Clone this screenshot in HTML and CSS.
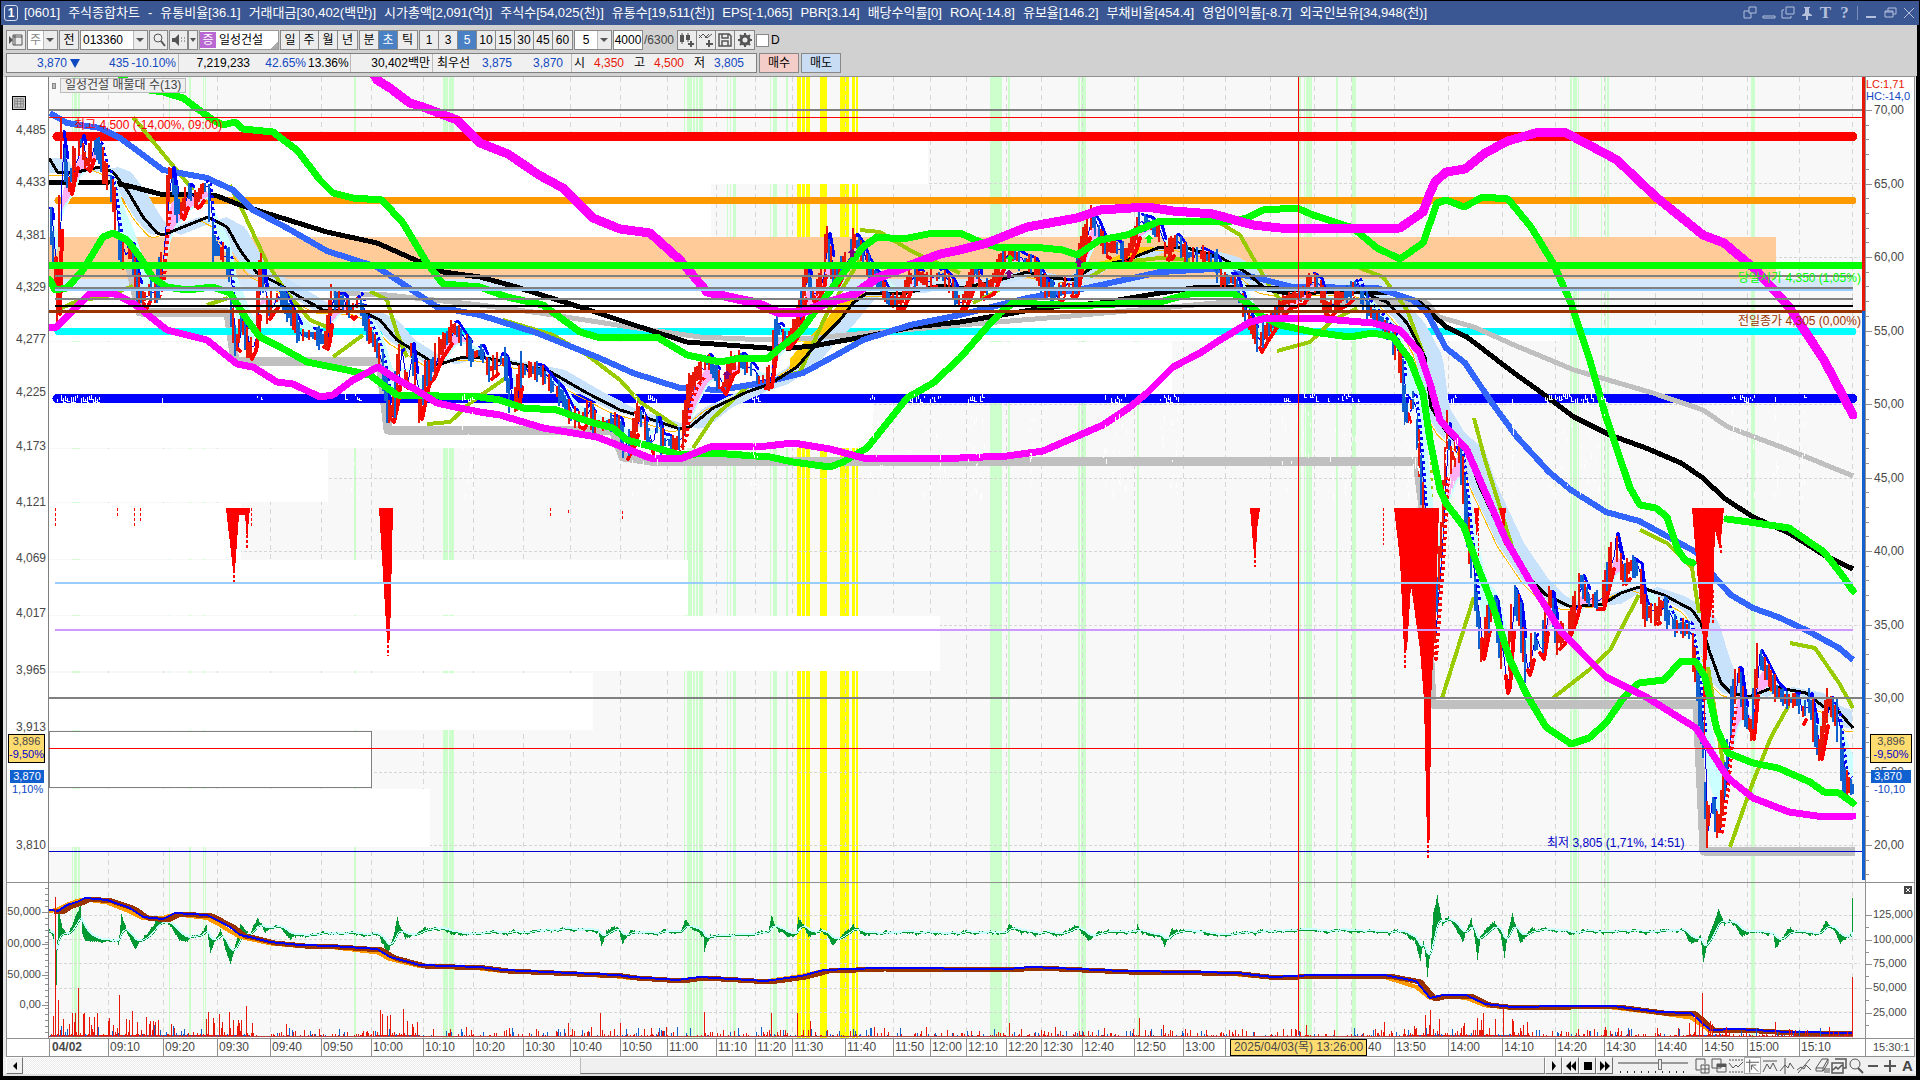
FILE: index.html
```html
<!DOCTYPE html>
<html lang="ko">
<head>
  <meta charset="UTF-8">
  <meta name="viewport" content="width=device-width, initial-scale=1.0">
  <title>[0601] 주식종합차트</title>
  <link rel="stylesheet" href="styles.css">
</head>
<body>

<div class="window">
  <header class="titlebar">
    <span class="badge">1</span>
    <h1 class="title">
      <span>[0601]</span><span>주식종합차트</span><span>-</span><span>유통비율[36.1]</span><span>거래대금[30,402(백만)]</span><span>시가총액[2,091(억)]</span><span>주식수[54,025(천)]</span><span>유통수[19,511(천)]</span><span>EPS[-1,065]</span><span>PBR[3.14]</span><span>배당수익률[0]</span><span>ROA[-14.8]</span><span>유보율[146.2]</span><span>부채비율[454.4]</span><span>영업이익률[-8.7]</span><span>외국인보유[34,948(천)]</span>
    </h1>
    <nav class="win-buttons">
      <button aria-label="분리"><svg viewBox="0 0 14 14"><path d="M6 1h7v6H6zM6 5H1v7h7V7" /></svg></button>
      <button aria-label="접기"><svg viewBox="0 0 14 14"><path d="M1 10h12v2H1z" /></svg></button>
      <button aria-label="복사"><svg viewBox="0 0 14 14"><path d="M5 1h8v7H5zM3 4H1v8h9v-2" /></svg></button>
      <button aria-label="고정"><svg viewBox="0 0 14 14"><path class="fill" d="M4 1h6v1H9v5l3 2v1H8v4H6v-4H2V9l3-2V2H4z" /></svg></button>
      <button class="serif" aria-label="글꼴">T</button>
      <button class="serif" aria-label="도움말">?</button>
      <i class="bar"></i>
      <button aria-label="최소화"><svg viewBox="0 0 14 14"><path class="fill" d="M2 10h10v2H2z" /></svg></button>
      <button aria-label="이전 크기로"><svg viewBox="0 0 14 14"><path d="M5 5V2h8v6h-3M2 5h8v6H2zM2 6h8" /></svg></button>
      <button aria-label="닫기"><svg viewBox="0 0 14 14"><path d="M2 2l10 10M12 2L2 12" /></svg></button>
    </nav>
  </header>

  <div class="toolbar">
    <button class="btn w20" aria-label="목록"><svg viewBox="0 0 16 16"><path d="M5 3h9v10H5zM7 3v10M5 5h9" /><path class="fill" d="M1 4v8l4-4z" /></svg></button>
    <span class="combo w31"><select aria-label="구분" class="dim"><option>주</option></select><i></i></span>
    <button class="btn w20">전</button>
    <span class="combo w68"><input aria-label="종목코드" value="013360"><i></i></span>
    <button class="btn w19" aria-label="검색"><svg viewBox="0 0 16 16"><circle cx="7" cy="6" r="4" /><path d="M10 9l4 5" stroke-width="2" /></svg></button>
    <span class="sound"><button class="btn w19" aria-label="소리"><svg viewBox="0 0 16 16"><path class="fill" d="M1 6h3l4-4v12l-4-4H1z" /><path d="M10 6h1M10 9h1M13 6h1M13 9h1" /></svg></button><button class="btn w10" aria-label="소리 메뉴"><i class="tri"></i></button></span>
    <span class="stock"><b>증</b><input aria-label="종목명" value="일성건설"></span>
    <span class="group"><button class="btn">일</button><button class="btn">주</button><button class="btn">월</button><button class="btn">년</button></span>
    <span class="group"><button class="btn">분</button><button class="btn on">초</button><button class="btn">틱</button></span>
    <span class="group"><button class="btn">1</button><button class="btn">3</button><button class="btn on">5</button><button class="btn">10</button><button class="btn">15</button><button class="btn">30</button><button class="btn">45</button><button class="btn">60</button></span>
    <span class="combo w38"><select aria-label="주기"><option>5</option></select><i></i></span>
    <span class="count"><input aria-label="개수" value="4000"><span>/6300</span></span>
    <span class="group">
      <button class="btn" aria-label="차트 추가"><svg viewBox="0 0 16 16"><path class="fill" d="M1 3h4v7H1zM7 3h4v5H7z" /><path d="M3 1v11M9 1v9" /><path d="M12 9v6M9 12h6" stroke-width="2" /></svg></button><button class="btn" aria-label="지표 추가"><svg viewBox="0 0 16 16"><path d="M1 6l4-4 4 4 5-4M1 3l3 3M7 6l4-4" /><path d="M11 8v7M8 12h7" stroke-width="2" /></svg></button><button class="btn" aria-label="저장"><svg viewBox="0 0 16 16"><path d="M2 2h10l2 2v10H2zM5 2v4h6V2M5 14V9h6v5" stroke-width="1.5" /></svg></button><button class="btn" aria-label="설정"><svg viewBox="0 0 16 16"><circle cx="8" cy="8" r="4" stroke-width="3" /><path d="M8 1v2M8 13v2M1 8h2M13 8h2M3 3l2 2M11 11l2 2M13 3l-2 2M3 13l2-2" stroke-width="2" /></svg></button>
    </span>
    <label class="check"><input type="checkbox">D</label>
  </div>

  <div class="quote">
    <div class="quote-box">
      <span class="cell c1 blue"><em>3,870</em><svg class="fall" viewBox="0 0 10 10"><path d="M0 1h10L5 10z" /></svg></span><span class="cell c2 blue">435</span><span class="cell c3 blue line">-10.10%</span>
      <span class="cell c4">7,219,233</span><span class="cell c5 blue">42.65%</span><span class="cell c6 line">13.36%</span>
      <span class="cell c7 line">30,402백만</span>
      <span class="cell c8">최우선</span><span class="cell c9 blue">3,875</span><span class="cell c10 blue line">3,870</span>
      <span class="cell c11">시</span><span class="cell c12 red">4,350</span><span class="cell c11">고</span><span class="cell c12 red">4,500</span><span class="cell c11">저</span><span class="cell c12 blue">3,805</span>
    </div>
    <button class="order buy">매수</button>
    <button class="order sell">매도</button>
  </div>

  <main class="chart">
    <div class="axis left" id="priceLeft">
      <button class="grid-btn" aria-label="표"><svg viewBox="0 0 14 14"><path d="M2 2h10v10H2zM2 5h10M5 2v10M9 2v10M2 8h10" /></svg></button>
    </div>
    <div class="plot" id="pricePlot">
      <svg id="price" viewBox="49 77 1816 805" preserveAspectRatio="none"></svg>
      <div class="legend"><i></i><span>일성건설 매물대 수(13)</span></div>
    </div>
    <div class="axis right" id="priceRight">
      <p class="extreme"><span class="red">LC:1,71</span><span class="blue">HC:-14,0</span></p>
    </div>

    <div class="axis left sub" id="volLeft"></div>
    <div class="plot sub">
      <svg id="volume" viewBox="49 883 1816 155" preserveAspectRatio="none"></svg>
    </div>
    <div class="axis right sub" id="volRight"><button class="close-sub" aria-label="지표 닫기"><svg viewBox="0 0 8 8"><path d="M2 2l4 4M6 2L2 6" /></svg></button></div>

    <div class="times-pad"></div>
    <div class="times" id="times"></div>
    <div class="times-end">15:30:1</div>
  </main>

  <footer class="scroll">
    <button class="sbtn" aria-label="왼쪽으로"><svg viewBox="0 0 12 12"><path class="solid" d="M8 2v8L4 6z" /></svg></button>
    <div class="track"><div class="thumb"></div></div>
    <button class="sbtn" aria-label="재생"><svg viewBox="0 0 12 12"><path class="solid" d="M4 1v10l4-5z" /></svg></button>
    <button class="sbtn" aria-label="뒤로"><svg viewBox="0 0 12 12"><path class="solid" d="M6 1v10L1 6zM11 1v10L6 6z" /></svg></button>
    <button class="sbtn" aria-label="정지"><svg viewBox="0 0 12 12"><path class="solid" d="M2 2h8v8H2z" /></svg></button>
    <button class="sbtn" aria-label="앞으로"><svg viewBox="0 0 12 12"><path class="solid" d="M1 1v10l5-5zM6 1v10l5-5z" /></svg></button>
    <div class="speed"><input type="range" aria-label="속도" min="0" max="10" value="6"></div>
    <div class="tools">
      <button aria-label="창 추가"><svg viewBox="0 0 16 16"><path d="M2 1h9v5M6 12H2V1M7 7h8v8H7zM7 11h8M11 7v8" /></svg></button>
      <button aria-label="창 복사"><svg viewBox="0 0 16 16"><path d="M1 1h9v9H1zM6 6h9v8H6z" /><path class="fill" d="M6 6h9v3H6z" /></svg></button>
      <button aria-label="영역"><svg viewBox="0 0 16 16"><path d="M1 2h14M1 14h14" stroke-dasharray="2 1" /><path d="M1 5l4 5 3-3 2 2 5-5" /></svg></button>
      <button class="on" aria-label="십자선"><svg viewBox="0 0 16 16"><path d="M1 4h14M5 1v14M7 7l7 7M7 7v5M7 7h5" /></svg></button>
      <button aria-label="수평선"><svg viewBox="0 0 16 16"><path d="M1 3h14M1 14l4-8 3 5 3-6 4 8" /></svg></button>
      <button aria-label="수직선"><svg viewBox="0 0 16 16"><path d="M6 0v16M1 13l5-6 3 3 2-5 4 6" /></svg></button>
      <button aria-label="추세선"><svg viewBox="0 0 16 16"><path d="M2 15L14 1M1 12l4-3 3 2 2-4 5 5" /></svg></button>
      <button aria-label="모두 지우기"><svg viewBox="0 0 16 16"><path d="M8 1h6l-5 9H2zM2 10v3h7v-3M9 13l5-8V1M11 10v5M13 10v5M15 10v5" /></svg></button>
      <button aria-label="비교"><svg viewBox="0 0 16 16"><path d="M4 1h11v9h-3M1 5h11v10H1zM2 12l3-3 2 2 4-4" stroke-width="1.5" /></svg></button>
      <button aria-label="돋보기"><svg viewBox="0 0 16 16"><circle cx="7" cy="6" r="5" /><path d="M10 10l5 5" stroke-width="2" /></svg></button>
      <button aria-label="축소"><svg viewBox="0 0 16 16"><path d="M3 8h10" stroke-width="2" /></svg></button>
      <button aria-label="확대"><svg viewBox="0 0 16 16"><path d="M2 8h12M8 2v12" stroke-width="2" /></svg></button>
      <button aria-label="자동">A</button>
    </div>
  </footer>
</div>

<script src="chart.js"></script>
</body>
</html>
```
FILE: styles.css
```css
* { box-sizing: border-box; }
body { margin: 0; background: #000; color: #000; font-family: "Liberation Sans", "Noto Sans CJK KR", sans-serif; font-size: 12px; line-height: 16px; }
button, input, select { font: inherit; color: inherit; margin: 0; padding: 0; border: 0; background: none; }
svg { display: block; }
h1, p { margin: 0; }
.blue { color: #1048c0; }
.red { color: #e81808; }

.window { height: 100vh; padding: 1px 3px 4px 3px; display: flex; flex-direction: column; overflow: hidden; }

/* title bar */
.titlebar { height: 24px; flex: none; background: #3a5793; color: #fff; display: flex; align-items: center; margin: 0 -2px; padding: 0 3px; }
.badge { width: 14px; height: 16px; border: 1px solid #d8e0f0; border-radius: 3px; font-weight: bold; line-height: 14px; text-align: center; }
.title { flex: 1; display: flex; gap: 8px; margin-left: 6px; font-size: 13px; font-weight: normal; line-height: 20px; white-space: nowrap; overflow: hidden; }
.win-buttons { display: flex; align-items: center; gap: 4px; color: #b4c0dc; }
.win-buttons button { width: 15px; height: 18px; display: flex; align-items: center; justify-content: center; }
.win-buttons svg { width: 14px; height: 14px; fill: none; stroke: #b4c0dc; }
.win-buttons .fill { fill: #b4c0dc; stroke: none; }
.win-buttons .serif { font-family: "Liberation Serif", serif; font-size: 17px; font-weight: bold; }
.bar { width: 1px; height: 14px; background: #7d90bb; margin: 0 1px; }

/* toolbar */
.toolbar { height: 28px; flex: none; display: flex; align-items: center; gap: 1px; padding: 2px 3px 0; background: #d1d1d1; }
.btn { width: 19px; height: 20px; border: 1px solid #888; background: #ececec; display: flex; align-items: center; justify-content: center; white-space: nowrap; }
.btn svg, .tools svg { width: 16px; height: 16px; fill: none; stroke: #555; }
.btn .fill, .tools .fill { fill: #555; stroke: none; }
.btn.on { background: #4a80c4; color: #fff; }
.group { display: flex; border: 1px solid #888; }
.group .btn { height: 18px; border-width: 0 1px 0 0; }
.group .btn:last-child { border-right: 0; }
.sound { display: flex; }
.w10 { width: 10px; }
.w19 { width: 19px; }
.w20 { width: 20px; }
.w31 { width: 31px; }
.w38 { width: 38px; }
.w68 { width: 68px; }
.combo { height: 20px; border: 1px solid #888; background: #fff; display: flex; }
.combo select, .combo input { flex: 1; min-width: 0; appearance: none; padding: 0 2px; outline: 0; }
.combo select { text-align: center; text-align-last: center; padding: 0; }
.combo .dim { color: #888; }
.combo i { width: 14px; background: #ececec; border-left: 1px solid #bbb; position: relative; }
.combo i::after, .tri { content: ""; border: 4px solid transparent; border-top-color: #555; border-bottom: 0; position: absolute; left: 2px; top: 7px; }
.tri { position: static; border-left-width: 3px; border-right-width: 3px; }
.stock { width: 80px; height: 20px; background: #fff; border: 1px solid #999; display: flex; }
.stock b { width: 16px; margin: 1px 0; background: #b868d0; color: #fff; text-align: center; font-weight: normal; }
.stock input { flex: 1; min-width: 0; padding-left: 3px; background: linear-gradient(135deg, transparent 50%, #aaa 50%) right bottom / 7px 7px no-repeat; }
.count { display: flex; align-items: center; color: #444; margin-right: 2px; }
.count input { width: 30px; height: 20px; border: 1px solid #888; background: #fff; color: #000; text-align: center; margin-right: 1px; }
.check { display: flex; align-items: center; gap: 2px; }
.check input { appearance: none; width: 13px; height: 13px; background: #fff; border: 1px solid #888; }

/* quote line */
.quote { height: 23px; flex: none; display: flex; gap: 2px; padding: 0 3px 3px; background: #d1d1d1; }
.quote-box { width: 751px; border: 1px solid #808080; background: #f0f0f0; display: flex; line-height: 18px; white-space: nowrap; }
.cell { text-align: right; padding-right: 2px; flex: none; }
.line { border-right: 1px solid #bbb; }
.c1 { width: 75px; display: flex; justify-content: flex-end; align-items: center; gap: 3px; }
.c1 em { font-style: normal; }
.fall { width: 10px; height: 10px; fill: #1048c0; }
.c2 { width: 49px; }
.c3 { width: 48px; }
.c4 { width: 73px; }
.c5 { width: 56px; }
.c6 { width: 43px; }
.c7 { width: 82px; }
.c8 { width: 39px; }
.c9 { width: 42px; }
.c10 { width: 58px; padding-right: 8px; }
.c11 { width: 15px; }
.c12 { width: 45px; padding-right: 8px; }
.order { width: 40px; border: 1px solid #888; }
.buy { background: #f4ccc8; }
.sell { background: #c8dcf4; }

/* chart */
.chart { flex: 1; min-height: 0; display: grid; grid-template-columns: 43px 1fr 50px; grid-template-rows: 805fr 156fr 19px; background: #fff; border-left: 3px solid #e8e8e8; border-right: 1px solid #e8e8e8; border-top: 1px solid #909090; margin-right: 1px; }
.axis { position: relative; overflow: hidden; color: #484848; font-size: 12px; }
.axis.left { border-left: 1px solid #909090; border-right: 1px solid #808080; }
.axis.right { border-left: 1px solid #909090; border-right: 1px solid #909090; }
.axis .tag { position: absolute; transform: translateY(-50%); white-space: nowrap; line-height: 14px; }
.axis.left .tag { right: 2px; }
.axis.left.sub .tag { right: 7px; }
.axis.right .tag { left: 8px; }
.axis.right.sub .tag { left: 7px; }
.axis.sub { font-size: 11px; }
.axis .tick { position: absolute; height: 1px; width: 3px; background: #909090; }
.axis.left .tick { right: 0; }
.axis.right .tick { left: 0; }
.axis .tick.big { width: 6px; }
.axis .cursor { position: absolute; left: 1px; right: 3px; border: 1px solid #000; background: #ffdc70; text-align: center; font-size: 11px; line-height: 13px; height: 29px; white-space: nowrap; }
.axis.right .cursor { left: 4px; right: 2px; }
.cursor span { display: block; }
.cursor span + span { color: #0000d0; }
.axis .last { position: absolute; left: 3px; right: 4px; background: #1060d0; color: #fff; text-align: center; font-size: 11px; line-height: 13px; }
.axis .change { position: absolute; left: 5px; color: #1048c0; font-size: 11px; line-height: 12px; white-space: nowrap; }
.axis.right .change { left: 8px; }
.axis.right .last { left: 5px; right: 3px; padding-right: 6px; }
.extreme { position: absolute; left: 0; top: 1px; font-size: 11px; line-height: 12px; }
.extreme span { display: block; white-space: nowrap; }
.grid-btn { position: absolute; left: 5px; top: 19px; width: 14px; height: 14px; border: 1px solid #000; background: #ccc; }
.grid-btn svg { width: 12px; height: 12px; fill: none; stroke: #777; }
.plot { position: relative; background: #f8f8f8; overflow: hidden; min-width: 0; min-height: 0; }
.plot svg { width: 100%; height: 100%; shape-rendering: crispEdges; }
.sub { border-top: 1px solid #909090; }
.note { position: absolute; transform: translateY(-50%); font-size: 12px; white-space: nowrap; line-height: 14px; }
.legend { position: absolute; left: 3px; top: 1px; display: flex; align-items: center; gap: 4px; color: #444; }
.legend i { width: 4px; height: 6px; border: 1px solid #888; background: #bbb; }
.legend span { background: #efefef; border: 1px solid #bbb; padding: 0 4px; line-height: 13px; }
.close-sub { position: absolute; right: 2px; top: 3px; width: 8px; height: 8px; background: #444; }
.close-sub svg { width: 8px; height: 8px; stroke: #fff; }
.times-pad { border: 1px solid #909090; border-right: 0; }
.times, .times-end { position: relative; border-top: 1px solid #909090; border-bottom: 1px solid #909090; color: #484848; line-height: 17px; white-space: nowrap; }
.times span { position: absolute; top: 0; height: 17px; padding-left: 1px; border-left: 1px solid #909090; }
.times .date { font-weight: bold; padding-left: 2px; }
.times .now { background: #ffdc70; border: 1px solid #000; padding: 0; line-height: 14px; width: 137px; text-align: center; }
.times-end { padding-left: 7px; border-left: 1px solid #909090; border-right: 1px solid #909090; overflow: hidden; font-size: 11px; }

/* scroll bar and drawing tools */
.scroll { height: 19px; flex: none; display: flex; background: #f0f0f0; padding-left: 3px; margin-right: 1px; border-bottom: 2px solid #e0e0e0; }
.sbtn { width: 17px; flex: none; background: #f0f0f0; border: 1px solid; border-color: #fff #707070 #707070 #fff; display: flex; align-items: center; justify-content: center; }
.sbtn svg { width: 12px; height: 12px; }
.track { flex: 1; display: flex; background: repeating-conic-gradient(#ebebeb 0 25%, #fff 0 50%) 0 0 / 2px 2px; }
.thumb { width: 63.4%; margin-left: auto; background: #f0f0f0; border: 1px solid; border-color: #fff #888 #707070 #bbb; }
.speed { width: 80px; padding: 1px 5px 0; }
.speed input { display: block; appearance: none; width: 70px; height: 15px; background: linear-gradient(#999, #999) 0 4px / 100% 2px no-repeat, repeating-linear-gradient(90deg, #333 0 1px, transparent 1px 7px) 2px 13px / 66px 2px no-repeat; }
.speed input::-webkit-slider-thumb { appearance: none; width: 4px; height: 11px; border: 1px solid #777; background: #eee; margin-top: -3px; }
.tools { width: 223px; display: flex; justify-content: space-between; }
.tools button { width: 17px; display: flex; align-items: center; justify-content: center; color: #444; font-weight: bold; font-size: 15px; }
.tools .on { background: #fff; border: 1px solid #aaa; }
```
FILE: chart.js
```js
const NS = 'http://www.w3.org/2000/svg';
const price = document.getElementById('price');
const volume = document.getElementById('volume');

// fixed seed, so the candles are the same on every load
let seed = 7;
function rnd() {
  seed = (seed * 16807) % 2147483647;
  return seed / 2147483647;
}

function el(svg, name, attrs) {
  const node = document.createElementNS(NS, name);
  for (const key in attrs) node.setAttribute(key, attrs[key]);
  svg.appendChild(node);
}
function rect(svg, x, y, w, h, fill) { el(svg, 'rect', { x, y, width: w, height: h, fill }); }
function stroke(svg, pts, color, width, extra) {
  el(svg, 'polyline', Object.assign({ points: pts.join(' '), fill: 'none', stroke: color, 'stroke-width': width, 'stroke-linejoin': 'round' }, extra));
}
function path(svg, d, color, width) { el(svg, 'path', { d, fill: 'none', stroke: color, 'stroke-width': width }); }
function area(svg, pts, color) { el(svg, 'polygon', { points: pts.join(' '), fill: color }); }

function parse(text) {
  const n = text.trim().split(/[\s,]+/).map(Number);
  const pts = [];
  for (let i = 0; i < n.length; i += 2) pts.push([n[i], n[i + 1]]);
  return pts;
}
function at(pts, x) {
  if (x <= pts[0][0]) return pts[0][1];
  for (let i = 1; i < pts.length; i++) {
    if (x <= pts[i][0]) {
      const a = pts[i - 1], b = pts[i];
      return a[1] + (b[1] - a[1]) * (x - a[0]) / (b[0] - a[0] || 1);
    }
  }
  return pts[pts.length - 1][1];
}

const hours = [108, 163, 217, 270, 321, 371, 423, 473, 523, 570, 620, 667, 716, 755, 792, 845, 893, 930, 966, 1006, 1041, 1082, 1134, 1183, 1225, 1270, 1314, 1351, 1394, 1448, 1502, 1555, 1604, 1655, 1702, 1747, 1799, 1852];
const greenBars = [[72, 1], [74, 3], [78, 2], [169, 1], [189, 2], [203, 1], [205, 1], [354, 2], [443, 5], [449, 5], [684, 1], [687, 5], [693, 2], [696, 2], [699, 4], [727, 1], [730, 1], [733, 3], [770, 1], [773, 4], [786, 2], [990, 12], [1008, 2], [1078, 2], [1081, 5], [1137, 2], [1299, 2], [1304, 1], [1306, 6], [1336, 2], [1352, 4], [1570, 2], [1573, 4], [1578, 1], [1601, 1], [1605, 1], [1607, 2], [1751, 4]];
const yellowBars = [[797, 4], [802, 3], [806, 4], [820, 7], [840, 9], [852, 3], [856, 2]];

function backdrop(svg, top, bottom, rows) {
  greenBars.forEach(b => rect(svg, b[0], top, b[1], bottom - top, '#ccffcc'));
  yellowBars.forEach(b => rect(svg, b[0], top, b[1], bottom - top, '#ffff00'));
  hours.forEach(x => el(svg, 'line', { x1: x + 0.5, x2: x + 0.5, y1: top, y2: bottom, stroke: '#d6d6d6', 'stroke-dasharray': '5 4' }));
  rows.forEach(y => el(svg, 'line', { x1: 49, x2: 1860, y1: y + 0.5, y2: y + 0.5, stroke: '#d6d6d6', 'stroke-dasharray': '3 2' }));
}

/* ---- price panel ---- */
backdrop(price, 77, 882, [183, 257, 331, 404, 478, 551, 625, 772, 845]);

// volume by price
[[132, 184, 928], [184, 237, 711], [291, 341, 1560], [342, 395, 1172], [396, 448, 873], [449, 502, 328], [503, 559, 241], [560, 615, 688], [616, 671, 940], [673, 730, 593], [731, 787, 371], [789, 847, 430]]
  .forEach(r => rect(price, 49, r[0], r[2] - 49, r[1] - r[0], '#ffffff'));
el(price, 'rect', { x: 49, y: 731.5, width: 322.5, height: 56, fill: 'none', stroke: '#808080' });
rect(price, 49, 237, 1727, 43, '#ffcc99');
rect(price, 55, 279, 1798, 12, '#d5e8fb');

const low = parse('130,267 140,312 228,313 235,361 380,362 388,430 613,430 623,457 650,461 1417,461 1422,500 1432,704 1697,704 1704,851 1855,851');
stroke(price, low, '#c0c0c0', 9);

// fixed levels: y, x1, x2, width, colour
[[136.5, 57, 1853, 9, '#ff0000'], [200.5, 58, 1853, 7, '#ff9900'], [331.5, 58, 1853, 7, '#00ffff'], [398.5, 57, 1853, 9, '#0000ff']]
  .forEach(l => el(price, 'line', { x1: l[1], x2: l[2], y1: l[0], y2: l[0], stroke: l[4], 'stroke-width': l[3], 'stroke-linecap': 'round' }));

// gaps in the blue level
const gaps = [[57, 100], [162, 165], [257, 263], [345, 360], [462, 476], [632, 660], [750, 760], [870, 883], [910, 948], [968, 985], [1030, 1034], [1103, 1127], [1160, 1180], [1282, 1318], [1328, 1360], [1405, 1420], [1445, 1458], [1512, 1514], [1545, 1606], [1730, 1755], [1773, 1780], [1800, 1805]];
let white = '';
gaps.forEach(g => {
  for (let x = g[0]; x < g[1]; x += 2) {
    if (rnd() < 0.7) white += `M${x + 0.5} ${394 + Math.floor(rnd() * 6)}v${2 + Math.floor(rnd() * 4)}h${Math.floor(rnd() * 3)}`;
  }
});
for (let i = 0; i < 420; i++) {
  const g = gaps[Math.floor(rnd() * gaps.length)];
  const x = Math.floor(g[0] + rnd() * (g[1] - g[0]));
  if (x > 350) white += `M${x + 0.5} ${Math.floor(406 + rnd() * 90)}v${2 + Math.floor(rnd() * 5)}`;
}

// moving averages
const grayMa = parse('333,293 387,295 480,305 540,313 630,327 700,337 767,340 813,338 880,332 960,325 1060,317 1160,308 1227,302 1327,302 1427,303 1439,317 1474,327 1514,345 1574,370 1653,393 1703,410 1728,427 1789,450 1853,476');
const blackMa = parse('49,183 110,182 133,187 160,194 217,196 240,205 327,232 377,243 420,262 443,272 480,277 513,286 580,307 640,327 687,342 780,349 813,346 863,337 913,327 960,322 1043,308 1100,303 1160,293 1200,287 1260,288 1327,291 1393,293 1420,303 1446,327 1467,337 1514,373 1542,393 1574,417 1610,435 1646,448 1681,463 1703,478 1724,498 1753,517 1789,533 1824,555 1853,569');
const blueMa = parse('50,113 67,123 100,128 120,138 143,155 163,170 207,178 233,190 253,210 287,228 327,251 377,267 400,282 437,307 480,315 537,333 597,357 633,373 680,388 720,390 767,382 803,373 840,353 863,340 910,325 960,315 1027,298 1087,288 1160,272 1213,269 1253,277 1293,287 1377,288 1413,300 1427,313 1446,348 1465,363 1492,403 1517,437 1549,472 1571,490 1606,512 1639,521 1696,552 1717,580 1731,595 1753,608 1778,617 1806,630 1839,648 1853,660');
const midMa = parse('49,158 58,173 77,172 100,167 113,172 127,190 143,217 157,233 163,235 183,227 208,217 227,227 240,250 257,273 277,283 300,297 323,310 363,312 380,320 397,340 413,350 437,365 460,358 480,357 507,362 547,370 587,393 620,410 647,418 680,429 690,427 713,408 747,392 770,384 797,367 820,340 840,320 853,303 867,293 907,293 940,285 960,288 993,282 1027,272 1053,278 1073,280 1093,267 1127,260 1160,247 1187,248 1220,257 1247,273 1267,290 1293,295 1327,292 1360,292 1387,302 1407,323 1425,357 1431,407 1447,433 1467,450 1478,483 1506,543 1531,580 1546,595 1571,607 1603,604 1621,593 1639,587 1664,595 1692,610 1701,623 1710,653 1721,683 1731,693 1749,697 1774,687 1806,693 1824,707 1839,712 1853,728');

function cloud(x1, x2, lag, lead, color) {
  const up = [], down = [];
  for (let x = x1; x <= x2; x += 3) {
    up.push([x, at(midMa, x - lag)]);
    down.unshift([x, at(midMa, x + lead)]);
  }
  area(price, up.concat(down), color);
}
cloud(49, 1853, 18, 9, '#c9e2fb');
cloud(790, 872, 0, 14, '#ffcc00');
cloud(1085, 1160, 0, 20, '#ffcc00');
const leadLine = [];
for (let x = 49; x <= 1853; x += 4) leadLine.push([x, at(midMa, x + 9) + 3]);
stroke(price, leadLine, '#ffbb00', 1);
stroke(price, grayMa, '#c0c0c0', 5);

// olive trend pieces
['133,117 160,150 193,190', '230,185 247,220 267,263 287,293 310,320 327,327', '57,310 80,300 105,297 133,286', '207,305 228,298', '333,357 363,335', '370,291 387,300 397,333 407,357', '427,424 450,422 470,403 507,377', '503,320 553,335 587,355 620,380 640,402 677,427', '693,448 713,418 747,387 800,372 827,313 860,260', '860,230 880,232 913,252 960,273', '973,303 1003,288', '1090,277 1113,263 1160,258 1190,260', '1220,223 1240,235 1253,258 1270,287 1283,303', '1277,351 1310,342 1333,320 1357,308', '1360,268 1383,277 1407,310 1423,353', '1474,418 1485,460 1497,498 1514,553', '1442,698 1474,597', '1553,698 1589,670 1610,650 1639,595', '1640,530 1667,543 1692,568 1699,613', '1708,667 1724,770', '1730,847 1753,782 1771,737 1789,705', '1790,643 1815,648 1839,683 1853,708']
  .forEach(t => stroke(price, parse(t), '#99cc00', 4));
stroke(price, [[1431, 430], [1432, 500]], '#99cc00', 3, { 'stroke-dasharray': '3 5' });

stroke(price, blackMa, '#000', 5);
stroke(price, blueMa, '#3366ff', 6);

// candles
const track = parse('49,215 53,260 56,305 60,138 64,165 68,185 72,165 80,142 85,165 92,146 98,150 103,170 108,180 113,200 117,240 122,255 130,250 136,285 142,300 148,290 155,290 160,270 163,230 167,190 170,174 174,200 180,210 187,190 195,200 203,187 207,190 211,240 217,250 222,255 228,265 230,310 235,348 240,320 248,350 253,340 258,285 260,270 266,310 273,300 280,295 290,315 300,335 312,335 325,340 330,300 340,300 350,310 358,300 365,325 375,345 382,370 389,418 394,395 399,350 405,385 410,350 418,410 425,375 430,370 438,350 445,340 453,327 462,340 472,355 480,352 488,370 500,360 505,365 508,395 515,400 519,370 530,370 540,372 550,385 560,395 570,415 580,420 587,410 595,425 613,422 618,425 624,450 632,435 637,412 645,430 650,445 655,420 660,440 675,445 682,430 688,390 695,375 707,360 715,375 722,385 730,365 740,360 750,370 757,380 768,378 773,340 777,328 785,340 793,330 797,320 802,290 806,275 812,295 820,280 826,240 833,280 840,265 848,255 853,240 860,250 866,265 872,275 880,285 888,300 900,300 908,280 915,275 925,280 940,275 950,285 957,300 962,300 970,280 975,268 980,290 990,285 1000,260 1010,252 1020,260 1033,265 1043,285 1055,295 1065,285 1073,290 1080,250 1087,225 1090,218 1097,230 1105,250 1112,245 1125,255 1133,240 1138,221 1148,224 1158,232 1163,250 1168,250 1175,240 1185,255 1200,255 1215,262 1220,280 1233,280 1242,305 1250,325 1258,343 1265,330 1275,315 1285,300 1300,295 1310,280 1318,285 1325,310 1335,300 1345,295 1356,285 1362,300 1372,315 1383,325 1392,340 1400,365 1405,415 1412,400 1417,440 1423,520 1428,600 1432,650 1440,540 1446,430 1450,460 1457,445 1462,480 1470,560 1476,610 1480,650 1485,625 1493,600 1500,650 1505,692 1512,595 1518,610 1525,670 1533,640 1540,650 1549,592 1556,640 1565,630 1573,610 1580,582 1588,600 1600,600 1610,560 1614,540 1622,575 1630,565 1638,570 1643,610 1655,615 1662,605 1672,625 1688,630 1695,670 1702,740 1705,830 1711,800 1717,830 1724,780 1730,710 1737,668 1743,710 1750,730 1757,655 1765,670 1775,690 1785,700 1797,700 1800,715 1808,700 1818,750 1827,700 1836,720 1843,780 1853,790');

let fast = at(track, 49), slow = fast;
const fastLine = [], slowLine = [];
for (let x = 49; x <= 1853; x += 2) {
  fast += (at(track, x) - fast) * 0.3;
  slow += (at(track, x) - slow) * 0.12;
  fastLine.push([x, fast]);
  slowLine.push([x, slow]);
}
for (let i = 0; i < fastLine.length - 1; i++) {
  const f = fastLine[i], s = slowLine[i], f2 = fastLine[i + 1], s2 = slowLine[i + 1];
  area(price, [f, f2, s2, s], f[1] < s[1] ? '#ffb0f4' : '#ccffff');
}
stroke(price, slowLine, '#ccffff', 2);
stroke(price, midMa, '#000', 3);

let reds = '', blues = '', trail = '', pen = '';
const over = [], under = [];
for (let x = 50; x <= 1853; x += 2) {
  const y = at(track, x), prev = at(track, x - 4), next = at(track, x + 3);
  const up = rnd() + (next < y ? 0.25 : -0.1) > 0.45;
  const size = 5 + Math.min(30, Math.abs(next - prev) * 0.7) + Math.pow(rnd(), 2) * 18;
  const bar = `M${x + 0.5} ${Math.round(y - size / 2)}v${Math.round(size)}`;
  if (rnd() < 0.85) {
    if (up) reds += bar; else blues += bar;
  }
  // stop marks: over the price when it falls, under it when it rises
  const mark = next > prev + 1.5 ? 'over' : next < prev - 1.5 ? 'under' : '';
  const list = mark === 'over' ? over : under;
  if (mark) {
    if (mark !== pen) list.push([]);
    list[list.length - 1].push([x, Math.round(at(track, x - 4) + (mark === 'over' ? -7 : 9))]);
  }
  pen = mark;
  trail += (trail ? 'L' : 'M') + x + ' ' + Math.round(at(track, x - 3) + rnd() * 6 - 3);
}
path(price, trail, '#0000e0', 1);
function stops(lists, color, width) {
  lists.filter(l => l.length > 1).forEach(l => {
    const steep = Math.abs(l[l.length - 1][1] - l[0][1]) > 60;
    stroke(price, l, color, width, steep ? { 'stroke-dasharray': '3 3' } : { 'stroke-linecap': 'round' });
  });
}
stops(over, '#0000ff', 3);
stops(under, '#ff0000', 4);
path(price, blues, '#1060d0', 2);
path(price, reds, '#e81808', 2);

// signal funnels
['1394,508 1439,508 1436,600 1431,700 1430,840 1427,840 1424,700 1420,650 1411,585 1407,650 1404,650 1400,560', '226,508 250,508 247,540 245,515 239,515 235,570 233,570 229,535', '379,508 393,508 390,640 387,640', '1692,508 1724,508 1720,550 1715,530 1713,600 1707,640 1704,760 1703,640 1697,570', '1250,508 1260,508 1257,530 1256,555 1254,555', '1474,508 1479,508 1477,540', '1499,508 1506,508 1504,530']
  .forEach(t => area(price, parse(t), '#ff0000'));
[[1428, 700, 860], [1405, 600, 668], [1383, 508, 545], [234, 540, 583], [247, 520, 549], [388, 640, 656], [55, 508, 526], [117, 508, 516], [134, 508, 527], [140, 508, 523], [251, 508, 526], [550, 508, 517], [568, 510, 513], [622, 511, 519], [1255, 555, 567], [1478, 508, 570], [1504, 508, 545], [1713, 590, 625], [1721, 545, 554]]
  .forEach(l => el(price, 'line', { x1: l[0], x2: l[0], y1: l[1], y2: l[2], stroke: '#ff0000', 'stroke-width': l[1] < 512 ? 1 : 2, 'stroke-dasharray': '3 2' }));

// outer bands
const greenUp = parse('118,73 135,88 163,92 183,98 213,120 223,125 235,122 243,129 273,132 297,150 320,180 333,193 353,198 382,200 403,223 427,263 443,284 480,287 507,297 543,305 580,332 597,337 657,337 687,355 720,362 740,358 767,359 780,348 800,332 833,287 863,247 877,237 903,239 933,233 960,233 980,242 1000,248 1033,247 1063,250 1077,255 1100,240 1127,235 1160,221 1227,222 1247,218 1263,210 1297,208 1313,215 1353,228 1377,248 1400,259 1423,243 1430,223 1437,203 1446,200 1464,207 1483,197 1508,199 1531,227 1553,263 1571,303 1589,357 1606,417 1624,470 1630,488 1640,505 1656,508 1667,517 1678,550 1685,560 1693,563');
const greenLow = parse('50,280 55,290 67,288 83,270 103,237 113,233 127,240 140,257 153,278 167,287 187,290 213,287 230,293 247,320 260,337 280,347 307,362 347,370 370,375 383,385 397,395 480,397 500,400 523,408 557,410 590,422 613,428 627,440 653,447 680,455 713,453 770,457 793,462 830,467 843,462 867,448 883,428 907,398 933,383 960,358 973,343 987,327 1000,313 1013,303 1060,305 1093,305 1160,302 1193,293 1233,293 1250,305 1263,317 1280,325 1313,332 1350,337 1373,333 1393,337 1410,360 1423,393 1430,440 1440,490 1446,503 1464,527 1478,567 1492,603 1510,660 1528,697 1546,727 1571,744 1589,738 1606,723 1624,697 1639,683 1664,680 1681,661 1696,662 1705,677 1717,730 1728,753 1753,763 1778,768 1810,782 1824,792 1839,793 1853,803');
const pinkUp = parse('373,73 377,80 390,88 410,103 423,107 457,120 480,143 508,154 539,175 548,180 563,188 593,218 620,229 650,233 680,260 707,292 733,298 757,303 777,312 803,312 830,302 853,295 877,278 903,268 940,254 960,250 987,243 1027,227 1077,218 1100,210 1147,207 1173,211 1213,214 1253,225 1280,228 1353,229 1400,228 1423,212 1430,193 1435,182 1446,172 1465,169 1485,153 1508,141 1539,132 1564,132 1589,145 1617,160 1656,197 1703,235 1724,243 1756,270 1789,307 1824,360 1853,415');
const pinkLow = parse('49,327 57,327 90,293 113,293 133,303 167,330 207,340 237,364 253,367 277,382 293,384 320,397 333,395 353,380 378,367 393,377 413,388 437,403 460,408 480,412 500,415 543,428 597,437 620,446 650,458 680,459 710,447 767,446 793,443 830,449 867,459 960,458 1007,456 1043,451 1073,438 1103,425 1130,407 1147,393 1173,367 1200,353 1220,340 1250,322 1267,318 1313,318 1373,323 1400,330 1420,353 1430,383 1440,420 1446,427 1467,450 1480,480 1506,540 1531,583 1560,630 1581,652 1606,677 1646,697 1696,728 1710,750 1728,778 1753,798 1789,812 1824,817 1853,816');
const round = { 'stroke-linecap': 'round' };
stroke(price, greenUp, '#00ff00', 7, round);
stroke(price, parse('1727,519 1756,523 1789,528 1824,552 1842,575 1853,591'), '#00ff00', 7, round);
stroke(price, greenLow, '#00ff00', 7, round);
stroke(price, pinkUp, '#ff00ff', 9, round);
stroke(price, pinkLow, '#ff00ff', 7, round);
path(price, white, '#ffffff', 1);

// thin levels: y, x1, x2, height, colour
[[109, 49, 1862, 2, '#808080'], [117, 49, 1862, 1, '#ff0000'], [262, 49, 1862, 7, '#00ff00'], [275, 55, 1853, 2, '#808080'], [287, 55, 1853, 2, '#808080'], [289, 55, 1853, 2, '#99ccff'], [298, 55, 1853, 2, '#808080'], [305, 55, 1853, 2, '#000000'], [310, 49, 1862, 3, '#993300'], [582, 55, 1853, 2, '#99ccff'], [629, 55, 1853, 2, '#cc99ff'], [697, 49, 1862, 2, '#808080'], [748, 49, 1865, 1, '#ff0000'], [851, 49, 1862, 1, '#0000c8']]
  .forEach(l => rect(price, l[1], l[0], l[2] - l[1], l[3], l[4]));

// buy and sell arrows
[[727, 375, '#800080'], [852, 253, '#800080'], [1009, 274, '#800080'], [1079, 263, '#800080'], [1010, 259, '#00ff00'], [1149, 239, '#00ff00']]
  .forEach(a => area(price, [[a[0], a[1] - 5], [a[0] + 4, a[1]], [a[0] + 2, a[1]], [a[0] + 2, a[1] + 4], [a[0] - 2, a[1] + 4], [a[0] - 2, a[1]], [a[0] - 4, a[1]]], a[2]));

rect(price, 1298, 77, 1, 805, '#ff0000');
rect(price, 1862, 77, 3, 234, '#e81808');
rect(price, 1862, 311, 3, 569, '#1060d0');

/* ---- volume panel ---- */
backdrop(volume, 883, 1038, [915, 939, 963, 988, 1012]);
const trend = parse('49,910 58,911 67,905 77,902 85,898 107,900 130,908 143,917 163,919 175,913 207,915 217,920 230,927 240,935 250,937 270,942 300,945 333,946 377,949 390,957 420,965 480,967 503,970 572,973 618,975 632,977 677,980 700,977 765,981 801,976 824,970 879,968 1008,969 1031,967 1123,971 1196,972 1237,973 1273,977 1315,975 1384,975 1416,981 1430,998 1443,995 1466,995 1485,1004 1512,1007 1567,1006 1613,1006 1659,1012 1691,1013 1710,1030 1737,1029 1788,1032 1852,1033');
const osc = parse('49,930 54,940 55,1030 57,940 58,910 62,930 68,935 80,905 82,930 85,938 100,942 115,940 118,945 121,915 128,935 134,950 148,930 157,918 170,925 180,938 200,935 206,925 210,950 220,930 230,965 240,925 250,932 257,918 265,932 275,925 290,938 320,933 378,934 388,955 397,917 405,938 425,928 470,935 500,932 580,930 598,933 601,946 606,930 618,930 622,942 630,930 680,933 684,920 698,930 703,935 704,950 710,936 768,932 771,915 778,930 796,936 798,918 808,935 822,928 831,943 853,927 860,933 1005,933 1009,925 1020,932 1060,934 1075,926 1088,940 1100,932 1135,932 1137,922 1142,936 1160,932 1164,942 1172,930 1220,935 1275,930 1400,932 1414,938 1420,960 1423,940 1427,974 1430,950 1433,915 1437,896 1442,925 1448,915 1462,942 1471,917 1474,935 1477,960 1480,935 1494,920 1500,932 1504,957 1508,930 1512,912 1520,941 1530,930 1600,932 1684,930 1691,943 1700,935 1703,961 1708,935 1718,908 1724,922 1730,918 1742,935 1755,930 1773,932 1775,944 1790,930 1818,935 1825,920 1832,928 1840,941 1851,932 1852,897');
let wave = '', avg = 932, drift = 0;
const calm = [];
for (let x = 49; x <= 1852; x++) {
  drift = drift * 0.8 + (rnd() - 0.5) * 3;
  const y = at(osc, x) + drift;
  avg += (y - avg) * 0.12;
  wave += `M${x + 0.5} ${Math.round(Math.min(y, avg))}V${Math.round(Math.max(y, avg) + 1)}`;
  calm.push([x, avg]);
}
stroke(volume, calm, '#ccffff', 3);
path(volume, wave, '#009933', 1);
stroke(volume, calm, '#ccffff', 1);
stroke(volume, trend.map(p => [p[0], at(trend, p[0] + 4) + 1]), '#ff9900', 4);
stroke(volume, trend.map(p => [Math.min(1853, p[0] + 5), p[1] + 1]), '#993300', 5);
stroke(volume, trend, '#0000ff', 2);

const peaks = { 55: 140, 58: 37, 63: 18, 72: 24, 78: 49, 84: 24, 97: 24, 109: 19, 119: 42, 126: 18, 132: 26, 155: 15, 208: 25, 229: 25, 233: 17, 246: 31, 252: 14, 286: 13, 380: 27, 390: 22, 403: 28, 417: 15, 568: 14, 600: 24, 620: 14, 704: 25, 771: 24, 797: 24, 810: 16, 1009: 14, 1139: 19, 1163: 12, 1306: 12, 1384: 15, 1425: 22, 1430: 27, 1439: 18, 1477: 19, 1503: 29, 1512: 18, 1702: 44, 1775: 15, 1852: 60 };
for (let x = 50; x < 1853; x++) {
  const busy = x < 250 || (x > 375 && x < 420) || (x > 1410 && x < 1530) || (x > 1685 && x < 1730);
  const h = peaks[x] || Math.pow(rnd(), 6) * (busy ? 22 : 9) + (busy ? 2 : 1);
  rect(volume, x, 1037 - Math.round(h), 1, Math.round(h), rnd() < 0.7 || h > 12 ? '#e81808' : '#1060d0');
}
rect(volume, 49, 1036, 1804, 1, '#b04040');
rect(volume, 1298, 883, 1, 152, '#ff0000');

/* ---- labels ---- */
function put(parent, cls, text, css) {
  const node = document.createElement('span');
  node.className = cls;
  node.innerHTML = text;
  Object.assign(node.style, css);
  document.getElementById(parent).appendChild(node);
}
const py = y => ((y - 77) / 805 * 100) + '%';
const vy = y => ((y - 883) / 155 * 100) + '%';
const px = x => ((x - 49) / 1816 * 100) + '%';

[['4,485', 130], ['4,433', 182], ['4,381', 235], ['4,329', 287], ['4,277', 339], ['4,225', 392], ['4,173', 446], ['4,121', 502], ['4,069', 558], ['4,017', 613], ['3,965', 670], ['3,913', 727], ['3,810', 845]]
  .forEach(t => put('priceLeft', 'tag', t[0], { top: py(t[1]) }));
for (let i = 0; i <= 10; i++) {
  const y = 110 + i * 73.5;
  put('priceRight', 'tag', (70 - i * 5) + ',00', { top: py(y) });
  for (let k = 0; k < 5; k++) put('priceRight', k ? 'tick' : 'tick big', '', { top: py(y + k * 14.7) });
}
[['50,000', 911], ['00,000', 943], ['50,000', 974], ['0,00', 1004]].forEach(t => {
  put('volLeft', 'tag', t[0], { top: vy(t[1]) });
  put('volLeft', 'tick big', '', { top: vy(t[1] + 1) });
});
for (let y = 888; y < 1036; y += 6) put('volLeft', 'tick', '', { top: vy(y) });
[['125,000', 914], ['100,000', 939], ['75,000', 963], ['50,000', 987], ['25,000', 1012]].forEach(t => {
  put('volRight', 'tag', t[0], { top: vy(t[1]) });
  put('volRight', 'tick big', '', { top: vy(t[1] + 1) });
  put('volRight', 'tick', '', { top: vy(t[1] + 13) });
});
['priceLeft', 'priceRight'].forEach(id => {
  put(id, 'cursor', '<span>3,896</span><span>-9,50%</span>', { top: py(734) });
  put(id, 'last', '3,870', { top: py(770) });
});
put('priceLeft', 'change', '1,10%', { top: py(783) });
put('priceRight', 'change', '-10,10', { top: py(783) });

put('pricePlot', 'note', '최고 4,500 (-14,00%, 09:00)', { left: px(74), top: py(125), color: '#ff0000' });
put('pricePlot', 'note', '당일시가 4,350 (1,05%)', { left: px(1738), top: py(278), color: '#00ff00' });
put('pricePlot', 'note', '전일종가 4,305 (0,00%)', { left: px(1738), top: py(321), color: '#993300' });
put('pricePlot', 'note', '최저 3,805 (1,71%, 14:51)', { left: px(1547), top: py(843), color: '#0000c8' });

put('times', 'date', '04/02', { left: '0' });
// the cursor time covers the labels from 13:10 to 13:30 and half of 13:40
hours.slice(0, -1).forEach((x, i) => {
  if (x > 1200 && x < 1360) return;
  const m = 9 * 60 + 10 + i * 10;
  put('times', 'time', String(Math.floor(m / 60)).padStart(2, '0') + ':' + String(m % 60).padStart(2, '0'), { left: px(x) });
});
put('times', 'time', '', { left: px(1225) });
put('times', 'half', '40', { left: px(1366) });
put('times', 'now', '2025/04/03(목) 13:26:00', { left: px(1230) });
```
